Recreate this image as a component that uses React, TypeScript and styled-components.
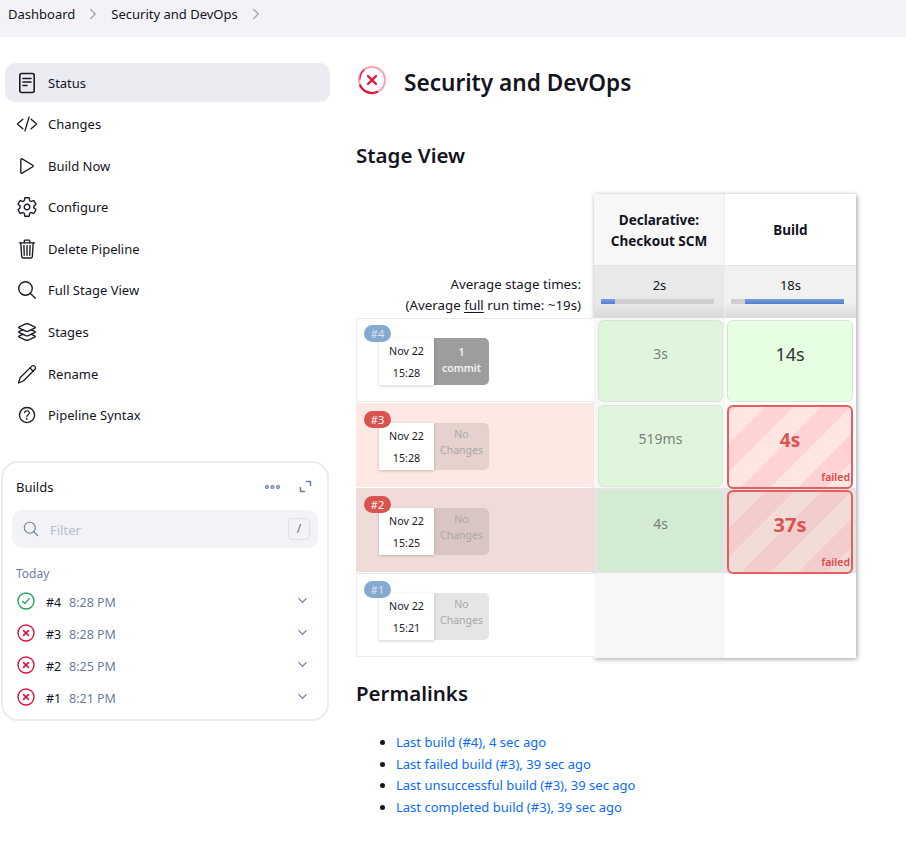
import React from "react";
import styled, { createGlobalStyle } from "styled-components";
import {
  IoCodeSlashOutline, IoPlayOutline, IoSettingsOutline, IoTrashOutline, IoSearchOutline,
  IoLayersOutline, IoHelpCircleOutline, IoChevronDown, IoChevronForward,
} from "react-icons/io5";

const Global = createGlobalStyle`
  html, body { margin: 0; padding: 0; background: #fff; }
  body { font-family: "Noto Sans", "Open Sans", sans-serif; font-size: 13px; color: #14141f; }
`;

const Page = styled.div` width: 906px; height: 865px; overflow: hidden; `;
const Crumbs = styled.nav`
  height: 37px; background: #f3f3f7; display: flex; align-items: flex-start; padding: 5px 0 0 8px; box-sizing: border-box;
  gap: 10px; line-height: 19px; color: #14141f;
`;
const CrumbSep = styled(IoChevronForward)` color: #a3abbb; font-size: 16px; margin-top: 1px; `;
const Body = styled.div` display: flex; `;
const Side = styled.aside` width: 356px; flex: none; padding: 26px 0 0 1px; box-sizing: border-box; `;
const Nav = styled.div` display: flex; flex-direction: column; gap: 2.6px; margin-left: 4px; width: 325px; `;
const NavItem = styled.div<{ $active?: boolean }>`
  height: 39px; border-radius: 10px; display: flex; align-items: center; padding-left: 11px; gap: 10px;
  background: ${(p) => (p.$active ? "#ebebf2" : "transparent")};
  svg { font-size: 22px; width: 22px; height: 22px; flex: none; color: #1b1b27; }
`;
const Builds = styled.section`
  margin-top: 26px; width: 328px; height: 260px; box-sizing: border-box; border: 2px solid #ebebf2; border-radius: 17px;
  padding: 14px 9px 0 9px; background: #fff;
`;
const BuildsHead = styled.div` display: flex; align-items: center; justify-content: space-between; padding: 0 6px 0 4px; height: 20px; `;
const HeadIcons = styled.div` display: flex; align-items: center; gap: 18px; svg { display: block; } `;
const Filter = styled.div`
  margin-top: 13px; height: 38px; border-radius: 10px; background: #f2f2f7; display: flex; align-items: center; padding: 0 8px 0 10px; color: #b4bfd0;
  gap: 10px; svg { font-size: 18px; color: #6f7f9c; flex: none; }
`;
const FilterText = styled.span` flex: 1; padding-top: 2px; `;
const Key = styled.span`
  width: 20px; height: 20px; border: 1px solid #dfe1e9; border-radius: 4px; display: flex; align-items: center; justify-content: center;
  color: #5d6b85; font-size: 12px;
`;
const Today = styled.div` margin: 18px 0 0 4px; color: #6c7d9c; font-size: 12px; line-height: 16px; `;
const BuildList = styled.div` margin-top: 3px; `;
const BuildRow = styled.div`
  height: 32px; display: flex; align-items: center; padding-left: 5px; font-size: 12.5px;
`;
const BuildNum = styled.span` margin-left: 11px; width: 23px; color: #14141f; padding-top: 3px; `;
const BuildTime = styled.span` color: #6c7d9c; flex: 1; padding-top: 3px; `;
const Chev = styled(IoChevronDown)` color: #6c7d9c; font-size: 13px; margin-right: 9px; margin-top: -1px; `;

const Main = styled.main` flex: 1; min-width: 0; `;
const TitleRow = styled.div` display: flex; align-items: center; gap: 17px; margin-top: 29px; height: 34px; padding-left: 1px; `;
const FailIconWrap = styled.span` display: flex; margin-top: -6px; `;
const Title = styled.h1` margin: 0; font-size: 22.6px; font-weight: 600; line-height: 34px; color: #14141f; `;
const H2 = styled.h2` margin: 0; font-size: 20.5px; font-weight: 600; line-height: 28px; color: #14141f; `;
const StageHead = styled(H2)` margin-top: 41px; `;
const Stage = styled.div` display: flex; margin-top: 25px; align-items: flex-start; `;
const LeftCol = styled.div` width: 238px; flex: none; `;
const AvgText = styled.div`
  height: 124px; box-sizing: border-box; display: flex; flex-direction: column; justify-content: flex-end; text-align: right; padding: 0 13px 2px 0;
  line-height: 21px; font-size: 13.3px; u { text-underline-offset: 2px; }
`;
const RunRow = styled.div<{ $bg: string }>`
  position: relative; height: 84px; margin-bottom: 1px; box-sizing: border-box; background: ${(p) => p.$bg};
  border: 1px solid ${(p) => (p.$bg === "#fff" ? "#ececec" : p.$bg)}; border-right: 0; padding: 19px 0 0 22px; display: flex;
`;
const Badge = styled.span<{ $fail?: boolean; $first?: boolean }>`
  position: absolute; left: 7px; top: ${(p) => (p.$first ? 6 : 7)}px; width: 27px; height: 17px; border-radius: 9px; font-size: 11px; line-height: 17px; text-align: center; z-index: 1;
  background: ${(p) => (p.$fail ? "#d9534f" : "#86a9d1")}; color: ${(p) => (p.$fail ? "#fff" : "#dbe6f2")};
`;
const DateCard = styled.div`
  width: 55px; height: 47px; background: #fff; box-shadow: 0 1px 3px rgba(0,0,0,.2); display: flex; flex-direction: column; align-items: center;
  font-size: 10.7px; line-height: 22px; color: #1a1a26; justify-content: center; position: relative;
`;
const Commit = styled.div<{ $solid?: boolean; $bg: string }>`
  width: 55px; height: 47px; box-sizing: border-box; padding-bottom: ${(p) => (p.$solid ? 3 : 9)}px; border-radius: 0 5px 5px 0; background: ${(p) => p.$bg}; display: flex; flex-direction: column; align-items: center; justify-content: center;
  font-size: 10.5px; line-height: 16px; color: ${(p) => (p.$solid ? "#f2f2f2" : "#a8a8a8")}; font-weight: ${(p) => (p.$solid ? 600 : 400)};
`;
const Table = styled.div`
  display: grid; grid-template-columns: 131px 131px; grid-template-rows: 71px 53px repeat(4, 85px); box-shadow: 1px 1px 5px rgba(0,0,0,.38); background: #fff;
`;
const HeadCell = styled.div<{ $alt?: boolean }>`
  display: flex; align-items: center; justify-content: center; text-align: center; font-weight: 700; font-size: 13.5px; line-height: 21px; color: #14141f; padding-top: 2px; box-sizing: border-box;
  background: ${(p) => (p.$alt ? "#f7f7f7" : "#fff")}; border-right: ${(p) => (p.$alt ? "1px solid #eee" : "0")};
`;
const AvgCell = styled.div<{ $alt?: boolean }>`
  padding: 10px 6px 0 ${(p) => (p.$alt ? 7 : 6)}px; box-sizing: border-box; text-align: center; line-height: 18px; font-size: 13px;
  background: linear-gradient(to bottom, ${(p) => (p.$alt ? "#e9e9e9" : "#f1f1f1")} 70%, #d9d9d9 100%);
  border-top: 1px solid #e4e4e4; border-right: ${(p) => (p.$alt ? "1px solid #eee" : "0")};
`;
const Bar = styled.div<{ $alt?: boolean }>` height: 5px; background: #cfcfcf; margin: 5px ${(p) => (p.$alt ? 4 : 6)}px 0 0; position: relative; `;
const BarFill = styled.div` position: absolute; top: 0; bottom: 0; background: linear-gradient(#7aa0dc, #4f7fcf); `;
const StageCell = styled.div<{ $bg: string; $first?: boolean }>`
  padding: 2px ${(p) => (p.$first ? "2px 1px 4px" : "3px 1px 2px")}; box-sizing: border-box; background: ${(p) => p.$bg}; display: flex; min-height: 0;
`;
const CellBox = styled.div<{ $bg: string; $fail?: boolean; $size: number; $color: string }>`
  flex: 1; position: relative; border-radius: 6px; display: flex; align-items: center; justify-content: center; box-sizing: border-box;
  background: ${(p) => p.$bg}; border: ${(p) => (p.$fail ? "2px solid #e26060" : "1px solid #d8e4d5")}; margin-bottom: ${(p) => (p.$fail ? -2 : 0)}px;
  font-size: ${(p) => p.$size}px; color: ${(p) => p.$color}; font-weight: ${(p) => (p.$fail ? 700 : 400)}; padding-bottom: 15px;
`;
const Failed = styled.span` position: absolute; right: 1px; bottom: 3px; font-size: 10.5px; line-height: 13px; color: #e04848; font-weight: 600; `;
const PermaHead = styled(H2)` margin-top: 21px; `;
const Links = styled.ul` margin: 25px 0 0 0; padding: 0 0 0 40px; line-height: 21.5px; li::marker { color: #14141f; } `;
const LinkA = styled.a` color: #0b6bff; text-decoration: none; `;

const StatusIcon = () => (
  <svg viewBox="0 0 22 22" fill="none" stroke="currentColor" strokeWidth="1.6" strokeLinecap="round">
    <rect x="3.8" y="1.5" width="14.4" height="19" rx="2" />
    <path d="M7 6.5h8M7 10h8M7 13.5h4" />
  </svg>
);
const PencilIcon = () => (
  <svg viewBox="0 0 22 22" fill="none" stroke="currentColor" strokeWidth="1.3" strokeLinejoin="round" strokeLinecap="round">
    <path d="M2.5 20l1.6-5.2L15.8 3.1a1.9 1.9 0 0 1 2.7 0l.5.5a1.9 1.9 0 0 1 0 2.7L7.3 18z" />
    <path d="M14 5l3.2 3.2" />
  </svg>
);
const DotsIcon = () => (
  <svg width="17" height="6" viewBox="0 0 17 6" fill="#a8b3c6" stroke="#7d8ba5" strokeWidth="1">
    <circle cx="3" cy="3" r="1.7" /><circle cx="8.5" cy="3" r="1.7" /><circle cx="14" cy="3" r="1.7" />
  </svg>
);
const ExpandIcon = () => (
  <svg width="13" height="13" viewBox="0 0 13 13" fill="none" stroke="#6c7d9c" strokeWidth="1.5" strokeLinecap="round" strokeLinejoin="round">
    <path d="M7.5 1.5h4v4M1.5 7.5v4h4" />
  </svg>
);
const RunIcon = ({ ok }: { ok?: boolean }) => (
  <svg width="18" height="18" viewBox="0 0 18 18" fill="none" stroke={ok ? "#22a85a" : "#e0173c"} strokeWidth="1.4" strokeLinecap="round" strokeLinejoin="round">
    <circle cx="9" cy="9" r="8" />
    {ok ? <path d="M5.7 9.4l2.2 2.2 4.4-5" /> : <path d="M6.6 6.6l4.8 4.8M11.4 6.6l-4.8 4.8" strokeWidth="1.7" />}
  </svg>
);
const FailBig = () => (
  <svg width="30" height="30" viewBox="0 0 30 30" fill="none" strokeLinecap="round">
    <circle cx="15" cy="15" r="13" stroke="#f7a3b0" strokeWidth="2" />
    <path d="M3.2 20.5A13 13 0 0 0 20 27" stroke="#e0173c" strokeWidth="2.2" />
    <path d="M3 14.2A13 13 0 0 1 7 5" stroke="#e0173c" strokeWidth="1.2" />
    <path d="M11 11l8 8M19 11l-8 8" stroke="#e0173c" strokeWidth="2.4" />
  </svg>
);

const navItems: [string, React.ReactNode][] = [
  ["Status", <StatusIcon />], ["Changes", <IoCodeSlashOutline />], ["Build Now", <IoPlayOutline />], ["Configure", <IoSettingsOutline />],
  ["Delete Pipeline", <IoTrashOutline />], ["Full Stage View", <IoSearchOutline />], ["Stages", <IoLayersOutline />], ["Rename", <PencilIcon />],
  ["Pipeline Syntax", <IoHelpCircleOutline />],
];
const builds = [["#4", "8:28 PM", true], ["#3", "8:28 PM", false], ["#2", "8:25 PM", false], ["#1", "8:21 PM", false]] as const;
const runs = [
  { n: "#4", fail: false, bg: "#fff", t: "15:28", c: ["1", "commit"], cb: "#9d9d9d", solid: true },
  { n: "#3", fail: true, bg: "#fde8e4", t: "15:28", c: ["No", "Changes"], cb: "#e5d2cd" },
  { n: "#2", fail: true, bg: "#efdcd8", t: "15:25", c: ["No", "Changes"], cb: "#d9c6c3" },
  { n: "#1", fail: false, bg: "#fff", t: "15:21", c: ["No", "Changes"], cb: "#e5e5e5" },
];
const stripes = (a: string, b: string) =>
  `repeating-linear-gradient(135deg, ${a} 0 5.6px, ${b} 5.6px 25.6px, ${a} 25.6px 40px)`;

export default function App() {
  return (
    <Page>
      <Global />
      <Crumbs>
        <span>Dashboard</span><CrumbSep /><span>Security and DevOps</span><CrumbSep />
      </Crumbs>
      <Body>
        <Side>
          <Nav>
            {navItems.map(([label, icon], i) => (
              <NavItem key={label} $active={i === 0}>{icon}<span>{label}</span></NavItem>
            ))}
          </Nav>
          <Builds>
            <BuildsHead>
              <span>Builds</span>
              <HeadIcons><DotsIcon /><ExpandIcon /></HeadIcons>
            </BuildsHead>
            <Filter><IoSearchOutline /><FilterText>Filter</FilterText><Key>/</Key></Filter>
            <Today>Today</Today>
            <BuildList>
              {builds.map(([n, t, ok]) => (
                <BuildRow key={n}><RunIcon ok={ok} /><BuildNum>{n}</BuildNum><BuildTime>{t}</BuildTime><Chev /></BuildRow>
              ))}
            </BuildList>
          </Builds>
        </Side>
        <Main>
          <TitleRow><FailIconWrap><FailBig /></FailIconWrap><Title>Security and DevOps</Title></TitleRow>
          <StageHead>Stage View</StageHead>
          <Stage>
            <LeftCol>
              <AvgText>
                <div>Average stage times:</div>
                <div>(Average <u>full</u> run time: ~19s)</div>
              </AvgText>
              {runs.map((r, i) => (
                <RunRow key={r.n} $bg={r.bg}>
                  <Badge $fail={r.fail} $first={i === 0}>{r.n}</Badge>
                  <DateCard><div>Nov 22</div><div>{r.t}</div></DateCard>
                  <Commit $bg={r.cb} $solid={r.solid}><div>{r.c[0]}</div><div>{r.c[1]}</div></Commit>
                </RunRow>
              ))}
            </LeftCol>
            <Table>
              <HeadCell $alt>Declarative:<br />Checkout SCM</HeadCell>
              <HeadCell>Build</HeadCell>
              <AvgCell $alt>2s<Bar $alt><BarFill style={{ left: 0, width: "12.4%" }} /></Bar></AvgCell>
              <AvgCell>18s<Bar><BarFill style={{ left: "12.4%", width: "87.6%" }} /></Bar></AvgCell>

              <StageCell $bg="#f7f7f7" $first><CellBox $bg="#dff6dd" $size={14} $color="#7b7f7b">3s</CellBox></StageCell>
              <StageCell $bg="#fff"><CellBox $bg="#e6ffe3" $size={18} $color="#333">14s</CellBox></StageCell>

              <StageCell $bg="#f7f7f7" $first><CellBox $bg="#dff6dc" $size={14} $color="#7b7f7b">519ms</CellBox></StageCell>
              <StageCell $bg="#fff"><CellBox $bg={stripes("#ffd3d3", "#ffe6e2")} $fail $size={19} $color="#d9534f">4s<Failed>failed</Failed></CellBox></StageCell>

              <StageCell $bg="#e4e4e4" $first><CellBox $bg="#d3ebd1" $size={14} $color="#7b7f7b">4s</CellBox></StageCell>
              <StageCell $bg="#e4e4e4"><CellBox $bg={stripes("#f3cccc", "#f2dcd8")} $fail $size={20} $color="#d9534f">37s<Failed>failed</Failed></CellBox></StageCell>

              <StageCell $bg="#f7f7f7" />
              <StageCell $bg="#fff" />
            </Table>
          </Stage>
          <PermaHead>Permalinks</PermaHead>
          <Links>
            <li><LinkA>Last build (#4), 4 sec ago</LinkA></li>
            <li><LinkA>Last failed build (#3), 39 sec ago</LinkA></li>
            <li><LinkA>Last unsuccessful build (#3), 39 sec ago</LinkA></li>
            <li><LinkA>Last completed build (#3), 39 sec ago</LinkA></li>
          </Links>
        </Main>
      </Body>
    </Page>
  );
}
